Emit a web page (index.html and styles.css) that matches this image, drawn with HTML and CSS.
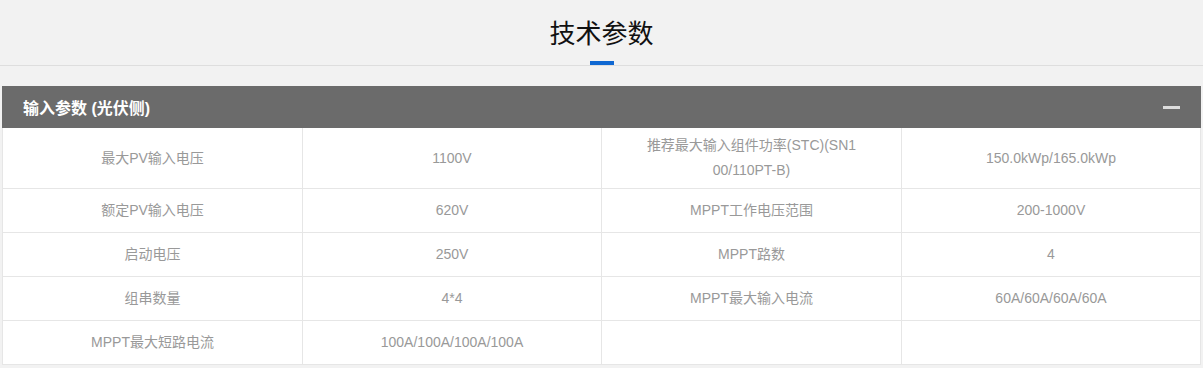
FILE: index.html
```html
<!DOCTYPE html>
<html lang="zh-CN">
<head>
<meta charset="utf-8">
<title>技术参数</title>
<link rel="stylesheet" href="styles.css">
</head>
<body>
<div class="page">
  <div class="title-block">
    <h2 class="title">技术参数</h2>
    <div class="title-bar"></div>
  </div>
  <div class="panel">
    <div class="panel-head">
      <span class="panel-title">输入参数 (光伏侧)</span>
      <span class="minus"></span>
    </div>
    <div class="grid">
      <div class="cell">最大PV输入电压</div>
      <div class="cell">1100V</div>
      <div class="cell">推荐最大输入组件功率(STC)(SN100/110PT-B)</div>
      <div class="cell">150.0kWp/165.0kWp</div>

      <div class="cell">额定PV输入电压</div>
      <div class="cell">620V</div>
      <div class="cell">MPPT工作电压范围</div>
      <div class="cell">200-1000V</div>

      <div class="cell">启动电压</div>
      <div class="cell">250V</div>
      <div class="cell">MPPT路数</div>
      <div class="cell">4</div>

      <div class="cell">组串数量</div>
      <div class="cell">4*4</div>
      <div class="cell">MPPT最大输入电流</div>
      <div class="cell">60A/60A/60A/60A</div>

      <div class="cell">MPPT最大短路电流</div>
      <div class="cell">100A/100A/100A/100A</div>
      <div class="cell"></div>
      <div class="cell"></div>
    </div>
  </div>
</div>
</body>
</html>
```

FILE: styles.css
```css
html, body {
  margin: 0;
  padding: 0;
  background: #f2f2f2;
  font-family: "Liberation Sans", Arial, "Noto Sans CJK SC", sans-serif;
}

.page {
  width: 1203px;
  height: 368px;
  overflow: hidden;
}

.title-block {
  padding-top: 14px;
  height: 51px;
  border-bottom: 1px solid #dedede;
  display: flex;
  flex-direction: column;
  align-items: center;
}

.title {
  margin: 0;
  font-size: 26px;
  line-height: 36px;
  font-weight: normal;
  color: #111;
  font-family: "Noto Sans CJK SC", sans-serif;
}

.title-bar {
  margin-top: 11px;
  width: 24px;
  height: 4px;
  background: #1068d2;
}

.panel {
  margin: 20px 2px 0 2px;
}

.panel-head {
  height: 42px;
  background: #6b6b6b;
  display: flex;
  align-items: center;
  justify-content: space-between;
  padding: 0 21px 0 21px;
}

.panel-title {
  color: #fff;
  font-size: 16px;
  font-weight: bold;
  font-family: "Liberation Sans", "Noto Sans CJK SC", sans-serif;
}

.minus {
  width: 17px;
  height: 3px;
  background: #dcdcdc;
}

.grid {
  display: grid;
  grid-template-columns: 300px 299px 300px 299px;
  width: 1199px;
  background: #fff;
  border-left: 1px solid #e6e6e6;
  box-sizing: border-box;
}

.cell {
  min-height: 44px;
  border-right: 1px solid #e6e6e6;
  border-bottom: 1px solid #e6e6e6;
  display: flex;
  align-items: center;
  justify-content: center;
  text-align: center;
  font-size: 14px;
  line-height: 25px;
  color: #999;
  padding: 5px 43px;
  box-sizing: border-box;
  word-break: break-all;
}

.cell:nth-child(-n+4) {
  min-height: 60px;
}
```
